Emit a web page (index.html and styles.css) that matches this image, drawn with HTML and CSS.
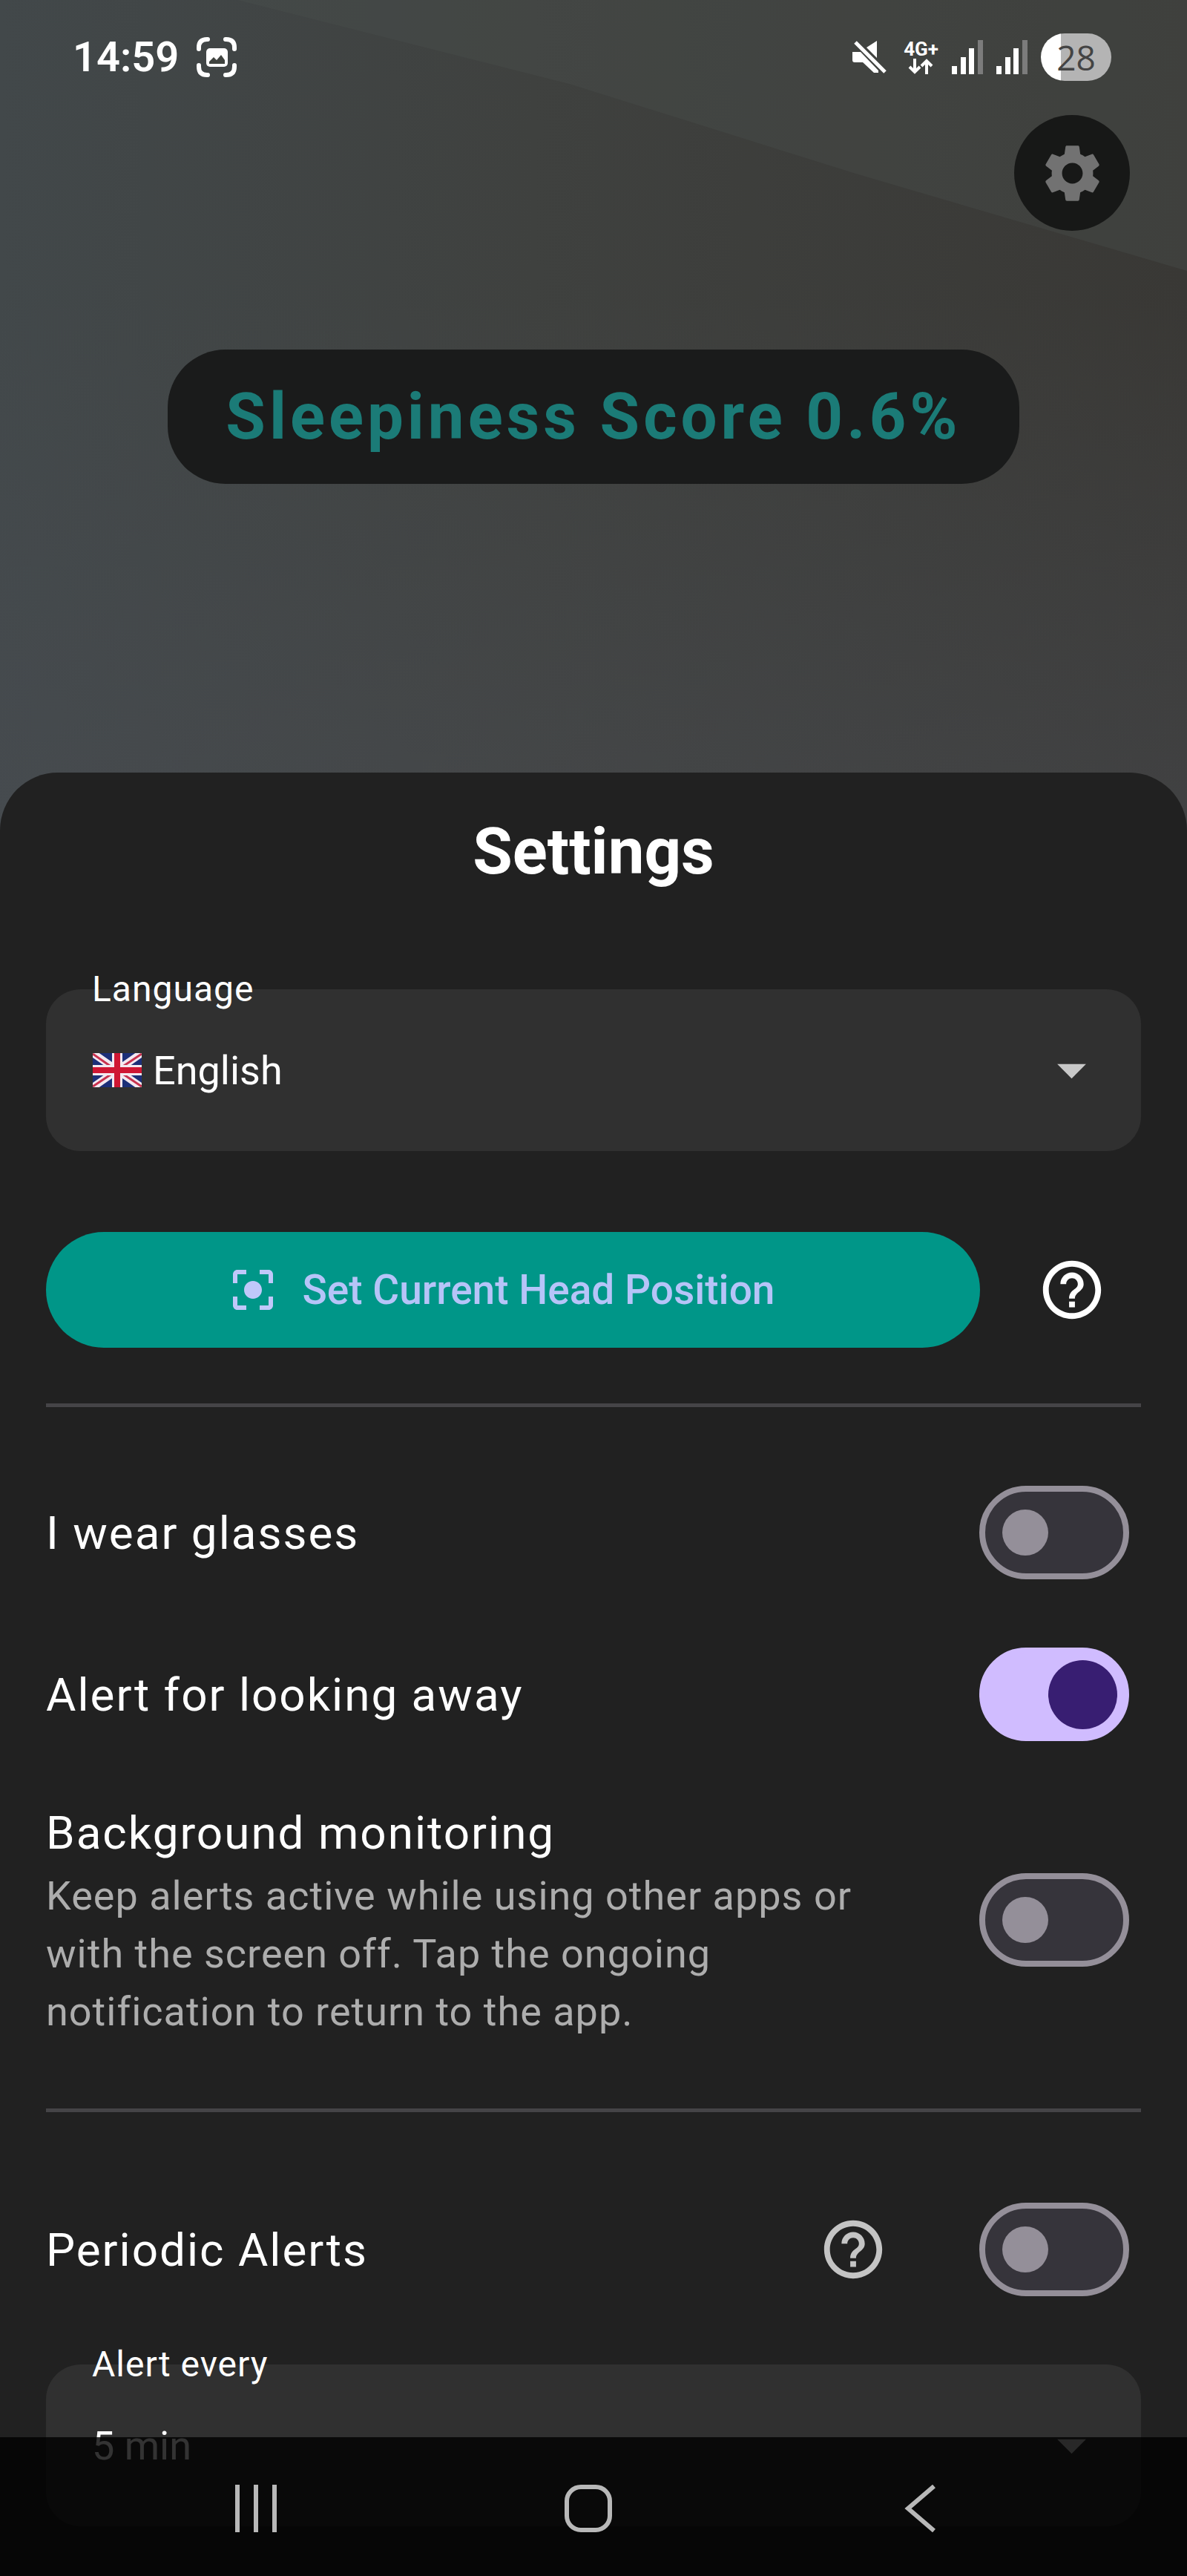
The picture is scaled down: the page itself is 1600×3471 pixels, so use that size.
FILE: index.html
```
<!DOCTYPE html>
<html lang="en">
<head>
  <meta charset="UTF-8">
  <meta name="viewport" content="width=device-width, initial-scale=1">
  <title>Settings</title>
  <link rel="stylesheet" href="styles.css">
</head>
<body>
  <div class="camera">
    <div class="status-bar">
      <div class="status-left">
        <span class="clock">14:59</span>
        <svg class="icon-capture" viewBox="0 0 54 54">
          <path d="M3 16v-2Q3 3 14 3h1M39 3h1Q51 3 51 14v2M51 38v2Q51 51 40 51h-1M15 51h-1Q3 51 3 40v-2" fill="none" stroke="#fff" stroke-width="6" stroke-linecap="round"/>
          <rect x="13" y="15" width="29" height="25" rx="5" fill="#fff"/>
          <path d="M17 36v-3l6-6 4 4 6-7 5 7v5z" fill="#40433f"/>
        </svg>
      </div>
      <div class="status-right">
        <svg class="icon-mute" viewBox="0 0 52 46">
          <path d="M1 16h11l24 25v3h-6L15 30H4Q1 30 1 27zM34 1v23L20 10z" fill="#fff"/>
          <path d="M5 3l40 40" stroke="#fff" stroke-width="5"/>
        </svg>
        <div class="network">
          <span>4G+</span>
          <svg viewBox="0 0 36 21">
            <path d="M9 0v18M2 11l7 7 7-7M25 21V3M18 10l7-7 7 7" fill="none" stroke="#fff" stroke-width="4"/>
          </svg>
        </div>
        <svg class="icon-signal" viewBox="0 0 42 46">
          <path d="M0 35h7v11H0zM12 23h7v23h-7zM23 11h7v35h-7z" fill="#fff"/>
          <path d="M35 0h7v46h-7z" fill="#7c7c7c"/>
        </svg>
        <svg class="icon-signal" viewBox="0 0 42 46">
          <path d="M0 35h7v11H0zM12 23h7v23h-7zM23 11h7v35h-7z" fill="#fff"/>
          <path d="M35 0h7v46h-7z" fill="#7c7c7c"/>
        </svg>
        <span class="battery">28</span>
      </div>
    </div>
    <button class="gear-button" type="button" aria-label="Settings">
      <svg viewBox="0 0 24 24"><path d="M19.14 12.94c.04-.3.06-.61.06-.94 0-.32-.02-.64-.07-.94l2.03-1.58c.18-.14.23-.41.12-.61l-1.92-3.32c-.12-.22-.37-.29-.59-.22l-2.39.96c-.5-.38-1.03-.7-1.62-.94l-.36-2.54c-.04-.24-.24-.41-.48-.41h-3.84c-.24 0-.43.17-.47.41l-.36 2.54c-.59.24-1.13.57-1.62.94l-2.39-.96c-.22-.08-.47 0-.59.22L2.74 8.87c-.12.21-.08.47.12.61l2.03 1.58c-.05.3-.09.63-.09.94s.02.64.07.94l-2.03 1.58c-.18.14-.23.41-.12.61l1.92 3.32c.12.22.37.29.59.22l2.39-.96c.5.38 1.03.7 1.62.94l.36 2.54c.05.24.24.41.48.41h3.84c.24 0 .44-.17.47-.41l.36-2.54c.59-.24 1.13-.56 1.62-.94l2.39.96c.22.08.47 0 .59-.22l1.92-3.32c.12-.22.07-.47-.12-.61l-2.01-1.58zM12 15.6c-1.98 0-3.6-1.62-3.6-3.6s1.62-3.6 3.6-3.6 3.6 1.62 3.6 3.6-1.62 3.6-3.6 3.6z"/></svg>
    </button>
    <div class="score">Sleepiness Score 0.6%</div>
  </div>

  <main class="sheet">
    <h1>Settings</h1>

    <div class="field language">
      <label for="language">Language</label>
      <svg class="flag" viewBox="0 0 66 46">
        <rect width="66" height="46" rx="3" fill="#1c2f78"/>
        <path d="M0 0l66 46M66 0L0 46" stroke="#f3e9f0" stroke-width="10"/>
        <path d="M0 1l33 23M66 1L33 23M0 45l33-22M66 45L33 23" stroke="#c8324f" stroke-width="3"/>
        <path d="M33 0v46M0 23h66" stroke="#f3e9f0" stroke-width="14"/>
        <path d="M33 0v46M0 23h66" stroke="#cf1633" stroke-width="8"/>
      </svg>
      <select id="language">
        <option>English</option>
      </select>
      <svg class="arrow" viewBox="0 0 24 24"><path d="M7 10l5 5 5-5z"/></svg>
    </div>

    <div class="head-row">
      <button class="head-button" type="button">
        <svg viewBox="0 0 24 24"><path d="M12 8c-2.210 0-4 1.790-4 4s1.790 4 4 4 4-1.790 4-4-1.790-4-4-4zm-7 7H3v4c0 1.100.9 2 2 2h4v-2H5v-4zM5 5h4V3H5c-1.100 0-2 .9-2 2v4h2V5zm14-2h-4v2h4v4h2V5c0-1.100-.9-2-2-2zm0 16h-4v2h4c1.100 0 2-.9 2-2v-4h-2v4z"/></svg>
        Set Current Head Position
      </button>
      <button class="help-button" type="button" aria-label="Help">
        <svg viewBox="0 0 24 24"><path d="M11 18h2v-2h-2v2zm1-16C6.480 2 2 6.480 2 12s4.480 10 10 10 10-4.480 10-10S17.520 2 12 2zm0 18c-4.410 0-8-3.590-8-8s3.590-8 8-8 8 3.590 8 8-3.590 8-8 8zm0-14c-2.210 0-4 1.790-4 4h2c0-1.100.9-2 2-2s2 .9 2 2c0 2-3 1.750-3 5h2c0-2.250 3-2.500 3-5 0-2.210-1.790-4-4-4z"/></svg>
      </button>
    </div>

    <hr>

    <div class="setting">
      <label for="glasses">I wear glasses</label>
      <input type="checkbox" id="glasses" class="switch">
    </div>
    <div class="setting">
      <label for="looking">Alert for looking away</label>
      <input type="checkbox" id="looking" class="switch" checked>
    </div>
    <div class="setting">
      <label for="background">Background monitoring
        <small>Keep alerts active while using other apps or with the screen off. Tap the ongoing notification to return to the app.</small>
      </label>
      <input type="checkbox" id="background" class="switch">
    </div>

    <hr>

    <div class="setting periodic">
      <label for="periodic">Periodic Alerts</label>
      <button class="help-button muted" type="button" aria-label="Help">
        <svg viewBox="0 0 24 24"><path d="M11 18h2v-2h-2v2zm1-16C6.480 2 2 6.480 2 12s4.480 10 10 10 10-4.480 10-10S17.520 2 12 2zm0 18c-4.410 0-8-3.590-8-8s3.590-8 8-8 8 3.590 8 8-3.590 8-8 8zm0-14c-2.210 0-4 1.790-4 4h2c0-1.100.9-2 2-2s2 .9 2 2c0 2-3 1.750-3 5h2c0-2.250 3-2.500 3-5 0-2.210-1.790-4-4-4z"/></svg>
      </button>
      <input type="checkbox" id="periodic" class="switch">
    </div>

    <div class="field">
      <label for="interval">Alert every</label>
      <select id="interval">
        <option>5 min</option>
      </select>
      <svg class="arrow" viewBox="0 0 24 24"><path d="M7 10l5 5 5-5z"/></svg>
    </div>
  </main>

  <nav class="nav-bar">
    <button type="button" aria-label="Recent apps">
      <svg viewBox="0 0 64 64"><path d="M7 0v64M32 0v64M57 0v64"/></svg>
    </button>
    <button type="button" aria-label="Home">
      <svg viewBox="0 0 64 64"><rect x="3" y="3" width="58" height="58" rx="19"/></svg>
    </button>
    <button type="button" aria-label="Back">
      <svg viewBox="0 0 64 64"><path d="M50 2L15 32l35 30"/></svg>
    </button>
  </nav>
</body>
</html>
```
FILE: styles.css
```
* {
  box-sizing: border-box;
}

body {
  margin: 0;
  min-height: 100vh;
  display: flex;
  flex-direction: column;
  position: relative;
  font-family: Roboto, sans-serif;
  color: #fff;
  background: linear-gradient(180deg, rgba(76, 79, 86, 0) 400px, rgba(76, 79, 86, 0.4) 1100px),
    linear-gradient(90deg, #42484a 0%, #3f413f 45%, #393835 100%);
}

/* lighter wall in the upper right of the camera view */
body::before {
  content: '';
  position: absolute;
  top: 0;
  right: 0;
  left: 0;
  height: 365px;
  background: rgba(74, 80, 78, 0.35);
  clip-path: polygon(20% 0, 100% 0, 100% 100%, 72% 64%, 48% 31%);
}

button {
  border: none;
  padding: 0;
  background: none;
  font-family: inherit;
  cursor: pointer;
}

svg {
  display: block;
  flex-shrink: 0;
}

.camera {
  position: relative;
  display: flex;
  flex-direction: column;
  padding-bottom: 389px;
}

/* Status bar */
.status-bar {
  display: flex;
  justify-content: space-between;
  align-items: center;
  padding: 45px 102px 46px 98px;
}

.status-left,
.status-right {
  display: flex;
  align-items: center;
}

.status-left {
  gap: 24px;
}

.status-right {
  gap: 18px;
}

.clock {
  font-size: 56px;
  font-weight: 600;
  line-height: 64px;
}

.icon-capture {
  width: 54px;
  height: 54px;
}

.icon-mute {
  width: 52px;
  height: 46px;
}

.network {
  display: flex;
  flex-direction: column;
  align-items: center;
  gap: 1px;
  font-size: 26px;
  font-weight: 700;
  line-height: 24px;
}

.network svg {
  width: 36px;
  height: 21px;
}

.icon-signal {
  width: 42px;
  height: 46px;
}

.battery {
  width: 95px;
  border-radius: 32px;
  background: linear-gradient(90deg, #fff 28%, #b4b4b4 28%);
  color: #444;
  font-family: "Open Sans", sans-serif;
  font-size: 46px;
  line-height: 64px;
  text-align: center;
}

.gear-button {
  align-self: flex-end;
  display: flex;
  align-items: center;
  justify-content: center;
  width: 156px;
  height: 156px;
  margin-right: 77px;
  border-radius: 50%;
  background: #171817;
}

.gear-button svg {
  width: 93px;
  height: 93px;
  fill: #727272;
}

.score {
  align-self: center;
  margin-top: 160px;
  padding: 40px 78px;
  border-radius: 78px;
  background: #1a1b1b;
  color: #1b7b77;
  font-size: 87px;
  font-weight: 700;
  line-height: 101px;
  letter-spacing: 5px;
}

/* Bottom sheet */
.sheet {
  position: relative;
  flex: 1;
  padding: 56px 62px 68px;
  border-radius: 78px 78px 0 0;
  background: #212121;
}

h1 {
  margin: 0 0 135px;
  font-size: 87px;
  font-weight: 700;
  line-height: 101px;
  text-align: center;
}

.field {
  position: relative;
}

.field label {
  position: absolute;
  top: -27px;
  left: 62px;
  font-size: 48px;
  line-height: 54px;
  letter-spacing: 1px;
}

.field select {
  display: block;
  width: 100%;
  height: 218px;
  padding: 0 62px;
  border: none;
  border-radius: 47px;
  background: #303030;
  color: #fff;
  font-family: inherit;
  font-size: 54px;
  appearance: none;
}

.language select {
  padding-left: 144px;
}

.flag {
  position: absolute;
  top: 86px;
  left: 63px;
  width: 66px;
  height: 46px;
}

.arrow {
  position: absolute;
  top: 62px;
  right: 47px;
  width: 93px;
  height: 93px;
  fill: #c8c8c8;
  pointer-events: none;
}

.head-row {
  display: flex;
  align-items: center;
  gap: 30px;
  margin-top: 93px;
}

.head-button {
  flex: 1;
  display: flex;
  align-items: center;
  justify-content: center;
  gap: 31px;
  height: 156px;
  padding-right: 34px;
  border-radius: 78px;
  background: #009688;
  color: #b6c4f8;
  font-size: 55px;
  font-weight: 500;
}

.head-button svg {
  width: 72px;
  height: 72px;
  fill: #c0c8fa;
}

.help-button {
  display: flex;
  align-items: center;
  justify-content: center;
  width: 187px;
  height: 187px;
}

.help-button svg {
  width: 94px;
  height: 94px;
  fill: #fff;
}

.help-button.muted svg {
  fill: #c4c4c4;
}

hr {
  height: 5px;
  margin: 60px 0;
  border: none;
  background: #454447;
}

.setting {
  display: flex;
  align-items: center;
  gap: 77px;
  min-height: 218px;
  padding: 31px 16px 31px 0;
}

.setting label {
  flex: 1;
  font-size: 62px;
  line-height: 93px;
  letter-spacing: 2px;
}

.setting small {
  display: block;
  color: #adadad;
  font-size: 54px;
  line-height: 78px;
  letter-spacing: 1px;
}

.periodic {
  padding: 0 16px 0 0;
  margin: 76px 0 46px;
}

/* Switches */
.switch {
  appearance: none;
  flex-shrink: 0;
  display: flex;
  align-items: center;
  width: 202px;
  height: 126px;
  margin: 0;
  padding: 0 23px;
  border: 8px solid #948f99;
  border-radius: 63px;
  background: #36343b;
  cursor: pointer;
}

.switch::before {
  content: '';
  width: 62px;
  height: 62px;
  border-radius: 50%;
  background: #948f99;
}

.switch:checked {
  justify-content: flex-end;
  padding: 0 8px;
  border-color: #d0bcff;
  background: #d0bcff;
}

.switch:checked::before {
  width: 93px;
  height: 93px;
  background: #381e72;
}

/* System navigation */
.nav-bar {
  position: fixed;
  right: 0;
  bottom: 0;
  left: 0;
  display: flex;
  justify-content: center;
  gap: 384px;
  padding: 64px 14px 59px 0;
  background: rgba(0, 0, 0, 0.8);
}

.nav-bar svg {
  width: 64px;
  height: 64px;
  fill: none;
  stroke: #b8b8b8;
  stroke-width: 6;
}
```
